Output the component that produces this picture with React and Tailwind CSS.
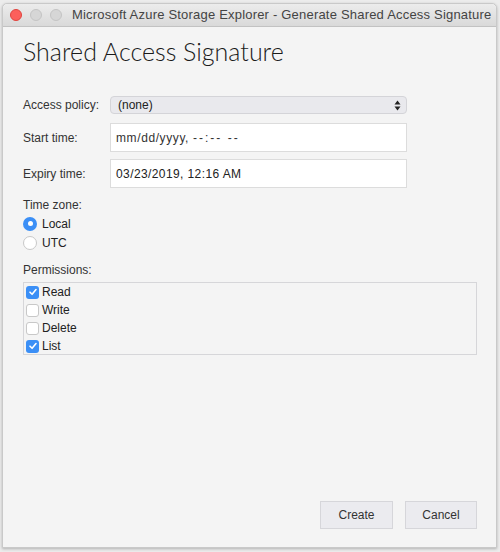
import React from "react";

function Check({ checked }) {
  return checked ? (
    <span className="w-[13px] h-[13px] rounded-[3px] bg-[#3b8ff6] flex items-center justify-center">
      <svg width="10" height="10" viewBox="0 0 10 10">
        <path d="M2 5.2 L4.1 7.3 L8 2.6" stroke="white" strokeWidth="1.6" fill="none" strokeLinecap="round" strokeLinejoin="round" />
      </svg>
    </span>
  ) : (
    <span className="w-[13px] h-[13px] rounded-[3px] bg-white border border-[#c8c8c8]" />
  );
}

export default function App() {
  return (
    <div className="w-[500px] h-[552px] bg-[#ececec] pt-[3px] pl-[2px] overflow-hidden" style={{ fontFamily: '"Liberation Sans", Arial, sans-serif' }}>
      <div className="w-[495px] h-[545px] rounded-t-[5px] border border-[#c9c9c9] bg-[#f4f4f4] flex flex-col shadow-[0_1px_3px_rgba(0,0,0,0.25)]">
        <div className="h-[23px] shrink-0 rounded-t-[5px] bg-gradient-to-b from-[#ececec] to-[#d9d9d9] border-b border-[#c2c2c2] flex items-center pl-[7px] relative">
          <div className="flex gap-[8px]">
            <span className="w-[12px] h-[12px] rounded-full bg-[#fc605c] border border-[#e0443e]" />
            <span className="w-[12px] h-[12px] rounded-full bg-[#d6d6d6] border border-[#c4c4c4]" />
            <span className="w-[12px] h-[12px] rounded-full bg-[#d6d6d6] border border-[#c4c4c4]" />
          </div>
          <div className="absolute left-[69px] right-0 top-0 h-[22px] flex items-center text-[13px] tracking-[0.2px] text-[#444] whitespace-nowrap">
            Microsoft Azure Storage Explorer - Generate Shared Access Signature
          </div>
        </div>

        <div className="flex-1 flex flex-col pl-[20px] pr-[18px]">
          <h1 className="mt-[10px] text-[25px] leading-[28px] font-light text-[#1a1a1a]" style={{ fontFamily: 'Lato, "Liberation Sans", sans-serif' }}>Shared Access Signature</h1>

          <div className="mt-[31px] flex items-center h-[18px]">
            <span className="w-[87px] text-[12px] text-[#333]">Access policy:</span>
            <div className="w-[297px] h-[18px] rounded-[4px] bg-[#e9e9ed] border border-[#d4d4d8] flex items-center justify-between pl-[7px] pr-[5px]">
              <span className="text-[12px] text-[#222]">(none)</span>
              <svg width="7" height="11" viewBox="0 0 7 11">
                <path d="M3.5 0.5 L6.5 4.5 H0.5 Z" fill="#222" />
                <path d="M3.5 10.5 L6.5 6.5 H0.5 Z" fill="#222" />
              </svg>
            </div>
          </div>

          <div className="mt-[9px] flex items-center h-[29px]">
            <span className="w-[87px] text-[12px] text-[#333]">Start time:</span>
            <div className="w-[297px] h-[29px] bg-white border border-[#dcdcdc] flex items-center pl-[5px] text-[12px] text-[#333] tracking-[0.6px] whitespace-pre">
              <span>mm/dd/yyyy, </span>
              <span className="tracking-[2px]">--:-- --</span>
            </div>
          </div>

          <div className="mt-[7px] flex items-center h-[29px]">
            <span className="w-[87px] text-[12px] text-[#333]">Expiry time:</span>
            <div className="w-[297px] h-[29px] bg-white border border-[#dcdcdc] flex items-center pl-[5px] text-[12px] text-[#222] tracking-[0.4px]">
              03/23/2019, 12:16 AM
            </div>
          </div>

          <div className="mt-[10px] text-[12px] text-[#333] leading-[15px]">Time zone:</div>
          <div className="mt-[2px] flex items-center gap-[5px] h-[17px]">
            <span className="w-[14px] h-[14px] rounded-full bg-[#3b8ff6] flex items-center justify-center">
              <span className="w-[5px] h-[5px] rounded-full bg-white" />
            </span>
            <span className="text-[12px] text-[#222]">Local</span>
          </div>
          <div className="mt-[2px] flex items-center gap-[5px] h-[17px]">
            <span className="w-[14px] h-[14px] rounded-full bg-white border border-[#c8c8c8]" />
            <span className="text-[12px] text-[#222]">UTC</span>
          </div>

          <div className="mt-[12px] text-[12px] text-[#333] leading-[15px]">Permissions:</div>
          <div className="mt-[4px] w-[454px] h-[73px] border border-[#d6d6d9] pl-[2px] flex flex-col">
            {[
              ["Read", true],
              ["Write", false],
              ["Delete", false],
              ["List", true],
            ].map(([label, c]) => (
              <div key={label} className="h-[18px] flex items-center gap-[3px]">
                <Check checked={c} />
                <span className="text-[12px] text-[#222]">{label}</span>
              </div>
            ))}
          </div>

          <div className="flex-1" />
          <div className="flex justify-end gap-[12px] mb-[18px] mr-[1px]">
            <button className="w-[73px] h-[28px] bg-[#ebebef] border border-[#d6d6da] text-[12px] text-[#333]">Create</button>
            <button className="w-[72px] h-[28px] bg-[#ebebef] border border-[#d6d6da] text-[12px] text-[#333]">Cancel</button>
          </div>
        </div>
      </div>
    </div>
  );
}
